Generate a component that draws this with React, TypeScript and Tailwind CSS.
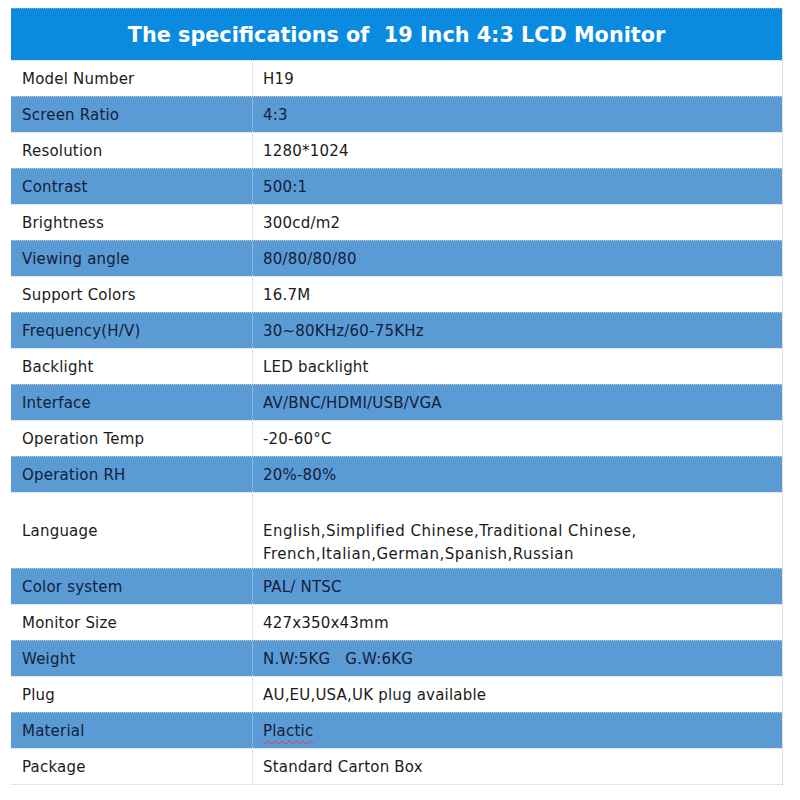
import React from 'react';

type Row = { label: string; value: React.ReactNode; tall?: boolean };

const rows: Row[] = [
  { label: 'Model Number', value: 'H19' },
  { label: 'Screen Ratio', value: '4:3' },
  { label: 'Resolution', value: '1280*1024' },
  { label: 'Contrast', value: '500:1' },
  { label: 'Brightness', value: '300cd/m2' },
  { label: 'Viewing angle', value: '80/80/80/80' },
  { label: 'Support Colors', value: '16.7M' },
  { label: 'Frequency(H/V)', value: '30~80KHz/60-75KHz' },
  { label: 'Backlight', value: 'LED backlight' },
  { label: 'Interface', value: 'AV/BNC/HDMI/USB/VGA' },
  { label: 'Operation Temp', value: '-20-60°C' },
  { label: 'Operation RH', value: '20%-80%' },
  {
    label: 'Language',
    tall: true,
    value: (
      <>
        English,Simplified Chinese,Traditional Chinese,
        <br />
        French,Italian,German,Spanish,Russian
      </>
    ),
  },
  { label: 'Color system', value: 'PAL/ NTSC' },
  { label: 'Monitor Size', value: '427x350x43mm' },
  { label: 'Weight', value: <span className="whitespace-pre">N.W:5KG   G.W:6KG</span> },
  { label: 'Plug', value: 'AU,EU,USA,UK plug available' },
  {
    label: 'Material',
    value: <span className="underline decoration-wavy decoration-red-500 decoration-1 underline-offset-4">Plactic</span>,
  },
  { label: 'Package', value: 'Standard Carton Box' },
];

export default function App() {
  return (
    <div className="w-[800px] h-[800px] bg-white pt-2 pl-[11px]" style={{ fontFamily: '"DejaVu Sans", Verdana, sans-serif' }}>
      <div className="w-[772px] border-r border-dotted border-[#b8c4d0]">
        {/* Title bar */}
        <div className="h-[52px] pt-[3px] bg-[#0a8be0] border-t border-dotted border-[#7fb8e8] flex items-center justify-center">
          <h1 className="text-white font-bold text-[20.75px] whitespace-pre">
            The specifications of  19 Inch 4:3 LCD Monitor
          </h1>
        </div>

        {rows.map((row, i) => {
          const blue = i % 2 === 1;
          return (
            <div
              key={row.label}
              className={`grid grid-cols-[242px_1fr] border-t border-dotted border-[#c4ccd4] text-[15px] tracking-[0.2px] ${
                row.tall ? 'h-[76px]' : 'h-[36px]'
              } ${blue ? 'bg-[#5b9bd5] text-[#13203a]' : 'bg-white text-[#1b1b1b]'}`}
            >
              <div className="flex items-center pl-[11px] pt-[2px] border-r border-dotted border-[#c4ccd4]">{row.label}</div>
              {row.tall ? (
                <div className="pl-[10px] pt-[27px] leading-[23px] tracking-[0.5px]">{row.value}</div>
              ) : (
                <div className="flex items-center pl-[10px] pt-[2px]">
                  <div>{row.value}</div>
                </div>
              )}
            </div>
          );
        })}
        <div className="border-t border-dotted border-[#c4ccd4]" />
      </div>
    </div>
  );
}
